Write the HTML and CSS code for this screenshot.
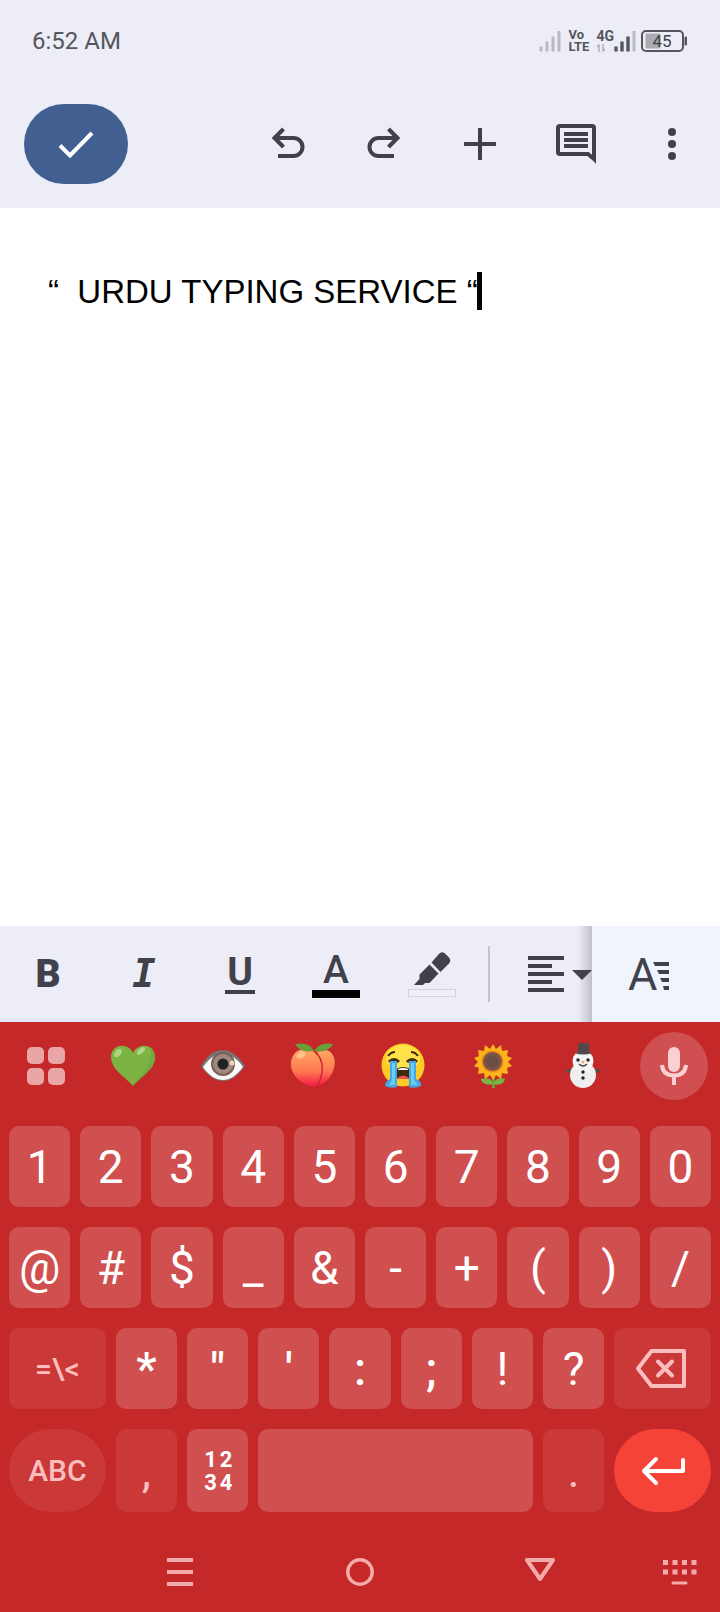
FILE: index.html
```html
<!DOCTYPE html>
<html lang="en">
<head>
<meta charset="utf-8">
<meta name="viewport" content="width=device-width, initial-scale=1">
<title>Document editor</title>
<link rel="stylesheet" href="styles.css">
</head>
<body>
<div class="screen">
  <header class="top">
    <div class="status">
      <time class="clock">6:52 AM</time>
      <div class="indicators">
        <svg class="faint" width="22" height="22" viewBox="0 0 22 22" aria-hidden="true"><path d="M2 16.500v5M8 11.500v10M14 6.500v15M20 1v20.500" stroke="currentColor" stroke-width="3" fill="none"/></svg>
        <span class="volte"><span>Vo</span><span>LTE</span></span>
        <span class="network">
          <span>4G</span>
          <svg width="10" height="9" viewBox="0 0 10 9" aria-hidden="true"><path d="M1 3l2-2v7M7 0v7l2-2" fill="none" stroke="currentColor" stroke-width="1.300"/></svg>
        </span>
        <svg class="signal" width="22" height="22" viewBox="0 0 22 22" aria-hidden="true"><path d="M2 16.500v5M8 11.500v10M14 6.500v15" stroke="currentColor" stroke-width="3.400" fill="none"/><path d="M20 1v20.500" stroke="#b9b9c3" stroke-width="3" fill="none"/></svg>
        <svg class="battery" width="47" height="24" viewBox="0 0 47 24"><rect x="4.500" y="4.500" width="15" height="15" rx="1" fill="#aaaab0"/><rect x="1" y="2" width="41" height="20" rx="4" fill="none" stroke="#55565f" stroke-width="2"/><path d="M44 8h1.500v8H44z" fill="#55565f" stroke="#55565f"/><text x="21" y="18" text-anchor="middle">45</text></svg>
      </div>
    </div>
    <div class="appbar">
      <button class="done" aria-label="Done"><svg width="36" height="28" viewBox="0 0 36 28"><path d="M2 15.500l10 10L34 3" fill="none" stroke="#fff" stroke-width="4"/></svg></button>
      <div class="actions">
        <button aria-label="Undo"><svg width="36" height="36" viewBox="0 0 36 36"><path d="M13.500 3L4.500 12l9 9M5 12h18.500a8.900 8.900 0 0 1 0 18H8" fill="none" stroke="currentColor" stroke-width="4"/></svg></button>
        <button aria-label="Redo"><svg width="36" height="36" viewBox="0 0 36 36"><path d="M22.500 3l9 9-9 9M31 12H12.500a8.900 8.900 0 0 0 0 18H28" fill="none" stroke="currentColor" stroke-width="4"/></svg></button>
        <button aria-label="Insert"><svg width="36" height="36" viewBox="0 0 36 36"><path d="M18 2v32M2 18h32" stroke="currentColor" stroke-width="4"/></svg></button>
        <button aria-label="Comments"><svg width="40" height="40" viewBox="0 0 40 40"><path d="M38 34V4a2 2 0 0 0-2-2H4a2 2 0 0 0-2 2v24a2 2 0 0 0 2 2h28l6 5z" fill="none" stroke="currentColor" stroke-width="4"/><path d="M33 31h7v9z" fill="currentColor"/><path d="M8 10h24M8 16h24M8 22h24" stroke="currentColor" stroke-width="4"/></svg></button>
        <button aria-label="More options"><svg width="36" height="36" viewBox="0 0 36 36" fill="currentColor"><circle cx="18" cy="6" r="4"/><circle cx="18" cy="18" r="4"/><circle cx="18" cy="30" r="4"/></svg></button>
      </div>
    </div>
  </header>

  <main class="page" contenteditable="true" role="textbox" aria-label="Document" spellcheck="false"><p class="line">“&nbsp; URDU TYPING SERVICE “<span class="caret"></span></p></main>

  <div class="format" role="toolbar" aria-label="Formatting">
    <button class="bold" aria-label="Bold">B</button>
    <button class="italic" aria-label="Italic">I</button>
    <button class="underline" aria-label="Underline"><span>U</span></button>
    <button class="color" aria-label="Text color"><span>A</span></button>
    <button aria-label="Highlight"><svg width="48" height="48" viewBox="0 0 48 48"><g fill="currentColor"><path d="M23.500 12.500l7-8q3.500-4 7-.500l3.500 3.500q2.500 3 0 6l-8.500 8.500z"/><path d="M21.500 14.500l9 9-9 9.500h-4.500l-2 2H6l5.500-6v-4.500z"/></g><rect x=".5" y="39.500" width="47" height="7" fill="#efeff7" stroke="#d2d2da"/></svg></button>
    <span class="divider"></span>
    <button class="align" aria-label="Alignment"><svg width="64" height="36" viewBox="0 0 64 36"><path d="M0 2h36M0 10h24M0 18h36M0 26h24M0 34h36" stroke="currentColor" stroke-width="4"/><path d="M44 14h20L54 24z" fill="currentColor"/></svg></button>
    <button class="styles" aria-label="Text formatting"><svg width="46" height="56" viewBox="-4 -10 46 56"><text x="-1" y="34">A</text><path d="M24 6h16v4H26zM28 14h12v4H30zM31 22h9v4h-7zM34 30h6v4h-5z" fill="currentColor"/></svg></button>
  </div>

  <section class="keyboard" aria-label="Keyboard">
    <div class="suggest">
      <button aria-label="Keyboard menu"><svg width="38" height="38" viewBox="0 0 38 38" fill="#eaa5a7"><rect width="17" height="17" rx="5"/><rect x="21" width="17" height="17" rx="5"/><rect y="21" width="17" height="17" rx="5"/><rect x="21" y="21" width="17" height="17" rx="5"/></svg></button>
      <button aria-label="Green heart"><svg width="46" height="46" viewBox="0 0 46 46"><path d="M23 43C17 35 1 27 1 14 1 1 18-1 23 10 28-1 45 1 45 14c0 13-16 21-22 29z" fill="#7cb342"/><path d="M23 43c6-8 22-16 22-29 0-4-2-8-5-10 5 16-7 26-17 39z" fill="#72a83d"/><ellipse cx="8" cy="10" rx="5" ry="3" transform="rotate(-50 8 10)" fill="#aed581"/><ellipse cx="31" cy="8" rx="5" ry="2.500" transform="rotate(-40 31 8)" fill="#aed581"/></svg></button>
      <button aria-label="Eye"><svg width="46" height="46" viewBox="0 0 46 46"><path d="M1 23C9 10 16 7 23 7s15 5 22 16c-8 11-15 15-22 15S8 34 1 23z" fill="#757575"/><path d="M3 24c7-10 13-13 20-13s14 4 20 13c-7 9-13 13-20 13S9 33 3 24z" fill="#fafafa"/><circle cx="23" cy="21" r="12" fill="#7b6154"/><circle cx="23" cy="21" r="10" fill="#a1887f"/><circle cx="23" cy="21" r="5.500" fill="#212121"/><circle cx="32" cy="20" r="2.500" fill="#efd0b8"/></svg></button>
      <button aria-label="Peach"><svg width="46" height="46" viewBox="0 0 46 46"><defs><linearGradient id="peach" x2="0" y2="1"><stop stop-color="#ffab63"/><stop offset=".6" stop-color="#ff7550"/><stop offset="1" stop-color="#f31545"/></linearGradient></defs><path d="M27 9c14-7 20 6 17 16-3 11-11 17-17 18z" fill="url(#peach)"/><path d="M26 44C9 42 0 30 1 19 3 5 16 4 24 9c10 9 8 24 2 35z" fill="url(#peach)"/><path d="M25 8c10 10 9 25 1 36" fill="none" stroke="#c92b35" stroke-width="1.500"/><path d="M22 8C14 10 7 5 5 1c10-2 16 1 19 7C28 2 34-1 43 1c-3 6-11 9-18 7z" fill="#689f38"/><ellipse cx="11" cy="12" rx="5" ry="3" transform="rotate(-30 11 12)" fill="#ffc28f"/></svg></button>
      <button aria-label="Loudly crying face"><svg width="46" height="46" viewBox="0 0 46 46"><circle cx="23" cy="22" r="21.500" fill="#fccb26"/><ellipse cx="23" cy="15" rx="17" ry="13" fill="#ffe14a"/><path d="M8 13q3-4 7-4M38 13q-3-4-7-4" fill="none" stroke="#422b0d" stroke-width="2"/><path d="M9 19q5-5 10 0M27 19q5-5 10 0" fill="none" stroke="#422b0d" stroke-width="3"/><path d="M16 36V26q7-4 14 0v10z" fill="#422b0d"/><path d="M18 26q5-2 10 0v1H18z" fill="#fff"/><path d="M16 36q7-7 14 0z" fill="#ef5350"/><path d="M10 18h7v26q-6 2-12-1 0-5 5-7zM29 18h7v18q6 2 5 7-6 3-12 1z" fill="#42a9e6"/><path d="M12 20h3v22H9q2-3 3-5zM31 20h3v17l4 5h-7z" fill="#6ecbf5"/></svg></button>
      <button aria-label="Sunflower"><svg width="46" height="46" viewBox="0 0 46 46"><path d="M22 33h3v12h-3z" fill="#689f38"/><path d="M23 41C15 43 11 39 11 36c7-2 11 0 12 5 2-5 6-7 12-5-1 4-5 7-12 5z" fill="#7cb342"/><path d="M23 1l3 5 5-4 1 6 6-1-1 6 5 2-4 4 4 4-5 2 1 6-6-1-1 6-5-4-3 5-3-5-5 4-1-6-6 1 1-6-5-2 4-4-4-4 5-2-1-6 6 1 1-6 5 4z" fill="#fbb51b"/><circle cx="22.500" cy="18.500" r="11" fill="#f48b18"/><circle cx="22.500" cy="18.500" r="9.500" fill="#795548"/><circle cx="22.500" cy="18.500" r="6" fill="#6d4c41"/></svg></button>
      <button aria-label="Snowman"><svg width="46" height="46" viewBox="0 0 46 46"><path d="M8 26l8 7M6 28l5 1M38 26l-8 7M40 28l-5 1" stroke="#5d4b4b" stroke-width="2.500"/><circle cx="23" cy="32" r="13" fill="#eee"/><circle cx="23" cy="18" r="10.500" fill="#f5f5f5"/><path d="M18 1q5-2 11 0v8l3 1q-9 3-18 0l4-1z" fill="#504a4c"/><circle cx="18" cy="17" r="1.700" fill="#222"/><circle cx="28" cy="17" r="1.700" fill="#222"/><path d="M19 21q4 4 8 0" stroke="#444" stroke-width="1.500" fill="none"/><path d="M21 18h4l-2 3z" fill="#f5a23a"/><circle cx="23" cy="29" r="1.700" fill="#222"/><circle cx="23" cy="35" r="1.700" fill="#222"/></svg></button>
      <button class="mic" aria-label="Voice input"><svg width="30" height="40" viewBox="0 0 30 40"><rect x="9" y="1" width="12" height="25" rx="6" fill="#fbd0d2"/><path d="M3 19q1 10.500 12 10.500T27 19M15 29v10" fill="none" stroke="#fbd0d2" stroke-width="4"/></svg></button>
    </div>

    <div class="keys">
      <button>1</button><button>2</button><button>3</button><button>4</button><button>5</button><button>6</button><button>7</button><button>8</button><button>9</button><button>0</button>
      <button>@</button><button>#</button><button>$</button><button>_</button><button>&amp;</button><button>-</button><button>+</button><button>(</button><button>)</button><button>/</button>
      <button class="wide dim label">=\&lt;</button><button class="mark">*</button><button class="mark">"</button><button class="mark">'</button><button class="mark">:</button><button class="mark">;</button><button>!</button><button>?</button>
      <button class="wide dim erase" aria-label="Backspace"><svg width="52" height="40" viewBox="0 0 52 40"><path d="M16.500 2H49v35H16.500L3 19.500z" fill="none" stroke="currentColor" stroke-width="4" stroke-linejoin="round"/><path d="M23 12.500l14 14M37 12.500l-14 14" stroke="currentColor" stroke-width="4" stroke-linecap="round"/></svg></button>
      <button class="wide dim round label">ABC</button><button class="dim">,</button>
      <button class="numpad" aria-label="Number pad"><span>1</span><span>2</span><span>3</span><span>4</span></button>
      <button class="space" aria-label="Space"></button><button class="dim">.</button>
      <button class="wide round enter" aria-label="Enter"><svg width="44" height="30" viewBox="0 0 44 30"><path d="M15 3L3 15l12 12M3 15h39V4" fill="none" stroke="#fff" stroke-width="4" stroke-linecap="round" stroke-linejoin="round"/></svg></button>
    </div>

    <nav class="nav" aria-label="System navigation">
      <button aria-label="Recent apps"><svg width="26" height="28" viewBox="0 0 26 28"><path d="M0 2h26M0 14h26M0 26h26" stroke="currentColor" stroke-width="4"/></svg></button>
      <button aria-label="Home"><svg width="28" height="28" viewBox="0 0 28 28"><circle cx="14" cy="14" r="12.200" fill="none" stroke="currentColor" stroke-width="3.500"/></svg></button>
      <button aria-label="Back"><svg width="30" height="28" viewBox="0 0 30 28"><path d="M2 2h26L15 21z" fill="none" stroke="currentColor" stroke-width="4" stroke-linejoin="round"/></svg></button>
      <button aria-label="Switch keyboard"><svg width="34" height="28" viewBox="0 0 34 28"><path d="M0 4.500h34M0 14h34" stroke="currentColor" stroke-width="5" stroke-dasharray="5 4.500"/><path d="M10 25h13" stroke="currentColor" stroke-width="3" stroke-linecap="round"/></svg></button>
    </nav>
  </section>
</div>
</body>
</html>
```

FILE: styles.css
```css
* { box-sizing: border-box; }

body {
  margin: 0;
  font-family: Roboto, "Liberation Sans", sans-serif;
  background: #c52828;
}

button {
  display: flex;
  align-items: center;
  justify-content: center;
  margin: 0;
  padding: 0;
  border: 0;
  background: none;
  color: inherit;
  font: inherit;
}

svg { display: block; flex: none; }

.screen {
  display: flex;
  flex-direction: column;
  min-height: 100vh;
}

.top { background: #ecedf6; color: #41414b; }

.status {
  display: flex;
  align-items: center;
  justify-content: space-between;
  height: 80px;
  padding: 2px 32px 0;
  color: #55565f;
}

.clock { font-size: 24px; line-height: 28px; }

.indicators { display: flex; align-items: center; }
.faint { color: #b9b9c3; }

.volte {
  display: flex;
  flex-direction: column;
  margin-left: 7px;
  font-size: 13px;
  font-weight: 700;
  line-height: 12px;
}

.network {
  display: flex;
  flex-direction: column;
  gap: 1px;
  margin-left: 7px;
  font-size: 14px;
  font-weight: 700;
  line-height: 13px;
}

.network svg { color: #aaaab2; }
.signal { margin-right: 5px; }
.battery text { fill: #41414b; font-size: 17px; }

.appbar {
  display: flex;
  justify-content: space-between;
  align-items: center;
  height: 128px;
  padding-left: 24px;
}

.done {
  width: 104px;
  height: 80px;
  border-radius: 40px;
  background: #415f91;
}

.actions { display: flex; }
.actions button { width: 96px; height: 96px; }

.page {
  flex: 1;
  padding: 64px 48px;
  background: #fff;
  color: #000;
  font-family: "Liberation Sans", Arial, sans-serif;
  font-size: 33px;
  line-height: 40px;
  outline: none;
}

.line { margin: 0; }

.caret {
  display: inline-block;
  width: 5px;
  height: 38px;
  margin-left: -1px;
  vertical-align: top;
  background: #000;
}

.format {
  display: flex;
  align-items: center;
  height: 96px;
  background: linear-gradient(to top, #e2e8f5 3px, #ecedf6 3px);
  color: #41414b;
  font-size: 39px;
  line-height: 40px;
}

.format button { width: 96px; height: 96px; }
.format .bold { font-weight: 900; }
.format .italic { font-family: "DejaVu Sans Mono", monospace; font-weight: 700; font-style: italic; }
.underline span { padding: 0 2px; border-bottom: 4px solid; font-weight: 700; line-height: 36px; }
.color span { width: 48px; border-bottom: 8px solid #000; font-weight: 500; line-height: 40px; }
.divider { width: 2px; height: 56px; margin-left: 8px; background: #c5c5ce; }

.format .align {
  flex: 1;
  justify-content: flex-end;
  background: linear-gradient(to left, #c0c0c9, #ecedf6 14px);
}

.format .styles { width: 128px; padding-right: 16px; background: #f0f4fd; }
.styles text { fill: currentColor; font-size: 45px; }

.keyboard { background: #c52828; }

.suggest {
  display: grid;
  grid-template-columns: 85px repeat(6, 1fr) 80px;
  align-items: center;
  height: 88px;
  padding: 0 12px 0 3px;
}

.suggest .mic {
  justify-self: end;
  width: 68px;
  height: 68px;
  border-radius: 50%;
  background: #d05052;
}

.keys {
  display: grid;
  grid-template-columns: repeat(20, 1fr);
  grid-template-rows: 81px 81px 81px 83px;
  gap: 20px 10px;
  padding: 16px 9px 0;
  color: #fff;
  font-size: 46px;
}

.keys button {
  grid-column: span 2;
  min-width: 0;
  border-radius: 10px;
  background: #d05050;
}

.keys .wide { grid-column: span 3; }
.keys .space { grid-column: span 8; }
.keys .dim { background: #cb3838; color: #fbbdbd; }
.keys .round { border-radius: 42px; }
.keys .enter { background: #f54337; }
.keys .mark { font-weight: 500; }
.keys .label { font-size: 30px; font-weight: 500; }
.keys .erase { padding-right: 4px; }

.keys .numpad {
  display: grid;
  grid-template-columns: 17px 14px;
  align-content: center;
  justify-content: center;
  font-size: 22px;
  font-weight: 700;
  line-height: 23px;
}

.nav {
  display: grid;
  grid-template-columns: repeat(8, 1fr);
  height: 100px;
  padding-top: 20px;
  color: #f5aaaa;
}

.nav button { grid-column: span 2; }
.nav button:first-child { grid-column: 2 / span 2; }
.nav button:last-child { grid-column: span 1; padding-left: 10px; }
```
